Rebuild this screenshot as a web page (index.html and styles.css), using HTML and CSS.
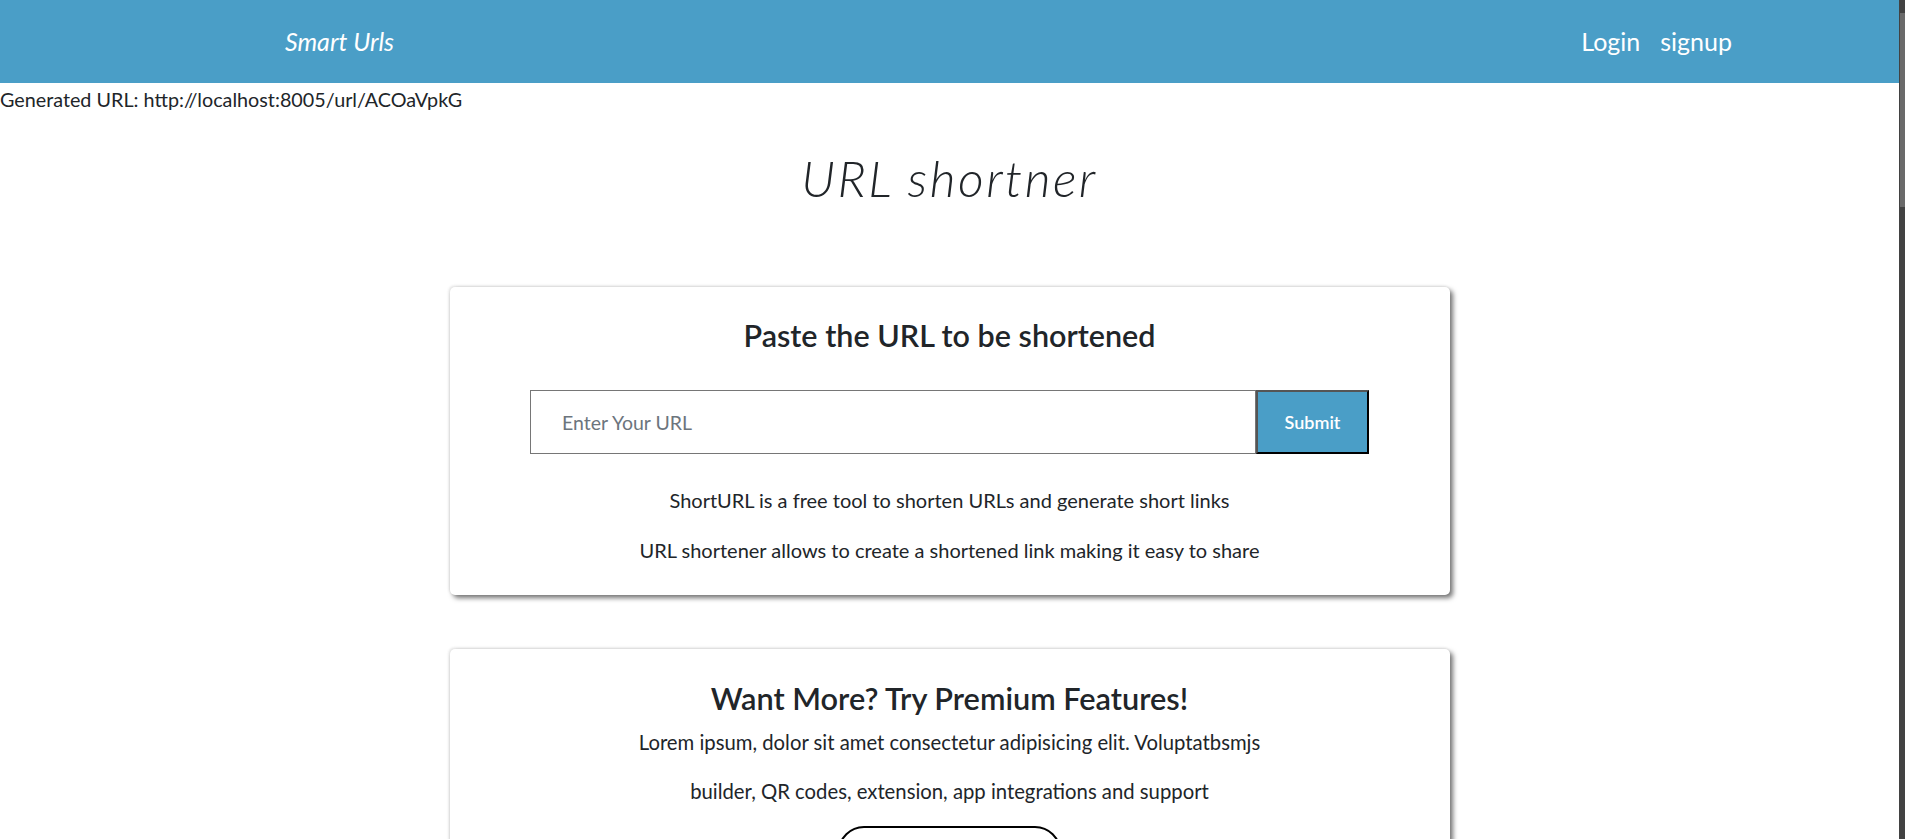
FILE: index.html
```html
<!DOCTYPE html>
<html lang="en">
<head>
<meta charset="utf-8">
<title>URL shortner</title>
<link rel="stylesheet" href="styles.css">
</head>
<body>
<header class="navbar">
  <a class="brand" href="#">Smart Urls</a>
  <nav class="nav-links">
    <a href="#">Login</a>
    <a href="#">signup</a>
  </nav>
</header>
<main class="page">
  <p class="generated">Generated URL: http://localhost:8005/url/ACOaVpkG</p>
  <h1 class="title">URL shortner</h1>

  <section class="card">
    <h2 class="card-title">Paste the URL to be shortened</h2>
    <form class="url-form">
      <input class="url-input" type="text" placeholder="Enter Your URL">
      <button class="submit" type="button">Submit</button>
    </form>
    <p>ShortURL is a free tool to shorten URLs and generate short links</p>
    <p>URL shortener allows to create a shortened link making it easy to share</p>
  </section>

  <section class="card premium">
    <h2 class="card-title">Want More? Try Premium Features!</h2>
    <p>Lorem ipsum, dolor sit amet consectetur adipisicing elit. Voluptatbsmjs</p>
    <p>builder, QR codes, extension, app integrations and support</p>
    <button class="pill" type="button">Get Started</button>
  </section>
</main>
<div class="scrollbar" aria-hidden="true"><div class="scrollbar-thumb"></div></div>
</body>
</html>
```

FILE: styles.css
```css
* {
  box-sizing: border-box;
}

html {
  background: #fff;
}

body {
  margin: 0 6px 0 0;
  font-family: Lato, "Open Sans", sans-serif;
  font-size: 20px;
  line-height: 1.5;
  color: #212529;
}

.navbar {
  height: 83px;
  background: #4a9ec7;
  display: flex;
  align-items: center;
  justify-content: space-between;
  padding: 0 167px 0 285px;
}

.brand {
  color: #fff;
  font-style: italic;
  font-size: 25px;
  text-decoration: none;
}

.nav-links {
  display: flex;
  gap: 20px;
}

.nav-links a {
  color: #fff;
  font-size: 25px;
  text-decoration: none;
}

.generated {
  margin: 2px 0 0;
  font-size: 19.75px;
}

.title {
  margin: 33px 0 0;
  text-align: center;
  font-size: 50px;
  font-weight: 300;
  font-style: italic;
  letter-spacing: 2.5px;
  line-height: 1.2;
}

.card {
  width: 1000px;
  margin: 79px auto 0;
  padding: 30px 0 10px;
  border-radius: 5px;
  background: #fff;
  text-align: center;
  box-shadow: 3px 3px 5px rgba(0, 0, 0, 0.55), -1px -1px 3px rgba(0, 0, 0, 0.12);
}

.card-title {
  margin: 0 0 37px;
  font-size: 30.5px;
  font-weight: 600;
  line-height: 1.2;
}

.url-form {
  display: flex;
  justify-content: center;
  margin: 0 0 31px;
}

.url-input {
  width: 726px;
  height: 64px;
  margin: 0;
  padding: 0 31px;
  border: 1px solid #767676;
  border-radius: 0;
  font-family: inherit;
  font-size: 19.5px;
  color: #212529;
}

.url-input::placeholder {
  color: #6c757d;
}

.submit {
  width: 113px;
  height: 64px;
  margin: 0;
  border: 2px solid;
  border-color: #555 #000 #000 #555;
  background: #4a9ec7;
  color: #fff;
  font-family: inherit;
  font-size: 18px;
  font-weight: 600;
}

.card p {
  margin: 0 0 20px;
}

.premium {
  margin-top: 54px;
  padding-top: 32px;
}

.premium .card-title {
  margin-bottom: 9px;
  font-size: 30.7px;
}

.premium p {
  font-size: 20.3px;
}

.premium p:nth-of-type(1) {
  margin-bottom: 18px;
}

.pill {
  width: 223px;
  height: 52px;
  border: 2px solid #000;
  border-radius: 26px;
  background: #fff;
  color: #212529;
  font-family: inherit;
  font-size: 20px;
  font-weight: 600;
}

.scrollbar {
  position: fixed;
  top: 0;
  right: 0;
  width: 6px;
  height: 100vh;
  background: #424242;
}

.scrollbar-thumb {
  position: absolute;
  top: 13px;
  left: 1px;
  right: 0;
  height: 194px;
  background: #6a6a6a;
}
```
